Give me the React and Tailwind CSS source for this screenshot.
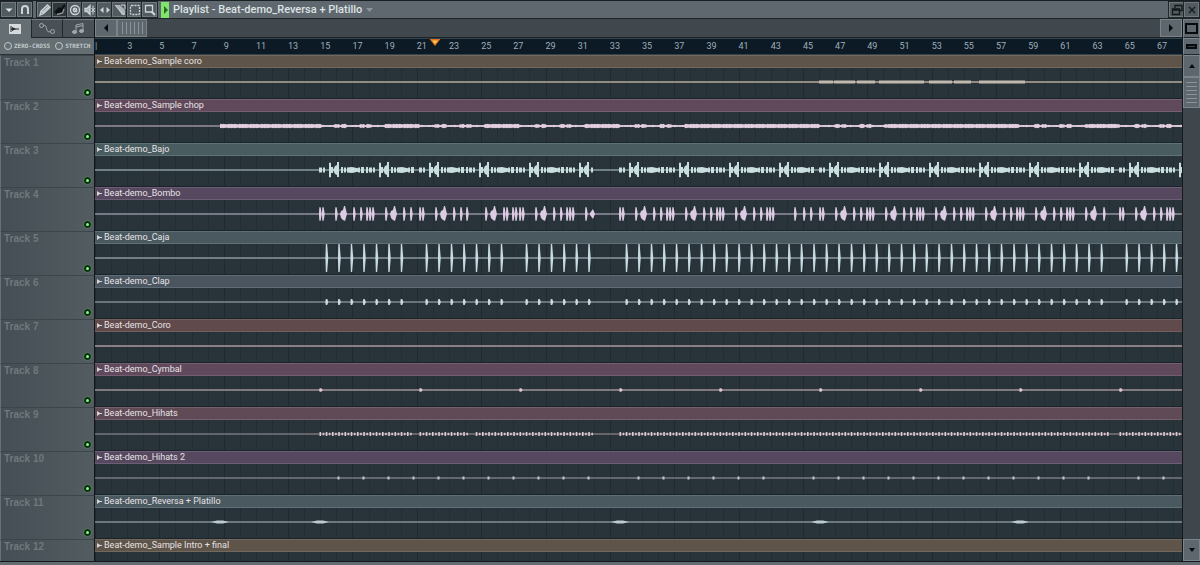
import { useState } from "react";
import clsx from "clsx";

const VIEW_W = 1087;
const MID = 14;
const BAR = 16.09;

const FULL = [16, "big24", 34, 41, 47, 50, 53];

// kick pattern, one entry for each 50 unit loop
const KICK = [
  [0, 3, ...FULL],
  [16, "big24", 34, 41, 50, 53],
  [16, "big24", 34, 41, 47],
  [16, "big24", 34, 37, 43, 46, 50, 53],
  FULL,
  [16, "small23"],
  [0, 3, ...FULL],
  FULL,
  FULL,
  [25, 34, 41, 50, 53],
  FULL,
  FULL,
  FULL,
  FULL,
  FULL,
  [16, "big24", 34],
  [0, 3, ...FULL],
];

const TRACKS = [
  { name: "Sample coro", wave: "choir", head: "bg-[#5f5449] border-[#73685d]", line: "text-[#9d968b]", thick: true },
  { name: "Sample chop", wave: "chop", head: "bg-[#60495a] border-[#74606e]", line: "text-[#e3cede]" },
  { name: "Bajo", wave: "bass", head: "bg-[#495c5f] border-[#5f7374]", line: "text-[#c9dfdf]" },
  { name: "Bombo", wave: "kick", head: "bg-[#56485f] border-[#6c5d74]", line: "text-[#dccbe3]" },
  { name: "Caja", wave: "snare", head: "bg-[#4a5960] border-[#5f7075]", line: "text-[#c9dbe2]" },
  { name: "Clap", wave: "clap", head: "bg-[#4a5560] border-[#5f6d77]", line: "text-[#b9c5cc]" },
  { name: "Coro", wave: "none", head: "bg-[#604a4c] border-[#745f5f]", line: "text-[#95878a]", thick: true },
  { name: "Cymbal", wave: "cymbal", head: "bg-[#60495c] border-[#745e6e]", line: "text-[#8b8088]", thick: true },
  { name: "Hihats", wave: "hats", head: "bg-[#604a56] border-[#745f6a]", line: "text-[#b4a2aa]" },
  { name: "Hihats 2", wave: "hats2", head: "bg-[#56495f] border-[#6c5e74]", line: "text-[#a9a5b2]" },
  { name: "Reversa + Platillo", wave: "reverse", head: "bg-[#4a5860] border-[#5f6f77]", line: "text-[#bccbd0]" },
  { name: "Sample Intro + final", wave: "none", head: "bg-[#5f5449] border-[#73685d]", line: "text-[#9d968b]" },
];

// waves that are brighter than their centre line
const WAVE_FILL = {
  choir: "#c0b9ac",
  clap: "#cbd8df",
  cymbal: "#dfc8d2",
  hats: "#dfc8d2",
  hats2: "#cbc6d4",
};

// closed shape: quick attack, short tail
const hit = (x, h, w = 1) =>
  `M${x - w} ${MID} L${x - w * 0.6} ${MID - h} L${x + w * 0.6} ${MID - h} L${x + w * 1.6} ${MID} L${x + w * 0.6} ${MID + h} L${x - w * 0.6} ${MID + h}Z`;

const block = (x1, x2, h) => `M${x1} ${MID - h}H${x2}V${MID + h}H${x1}Z`;

function snareSlots() {
  const out = [];
  for (let k = 0; k < 69; k++) {
    if ([7, 15, 22, 23, 63].includes(k)) continue;
    out.push(231.5 + k * 12.5);
  }
  return out;
}

function chopPath() {
  const loud = [[125, 227], [295, 325], [395, 425], [495, 525], [595, 725], [795, 925], [995, 1025]];
  const blobs = [17, 24, 42, 49, 67];
  let top = "";
  let bottom = "";
  for (let x = 125; x <= VIEW_W; x++) {
    const isLoud = loud.some(([a, b]) => x >= a && x < b);
    const pos = (x - 25) % 100;
    const isBlob = blobs.some((b) => Math.abs(pos - b) < 3);
    const noise = ((x * 37) % 11) / 14;
    const h = isLoud ? 1.6 + noise : isBlob ? 1.5 + noise : 0.7 + noise * 0.6;
    top += ` L${x} ${MID - h}`;
    bottom = ` L${x} ${MID + h}` + bottom;
  }
  return `M125 ${MID}${top}${bottom}Z`;
}

function bassPath() {
  let d = "";
  for (let k = 0; k < 18; k++) {
    const x = 225 + k * 50;
    if (k === 0 || k === 6) d += block(x - 1, x + 2, 2.5) + block(x + 3, x + 5, 2.5);
    d += block(x + 9, x + 11, 7.3) + block(x + 11, x + 13, 3);
    d += `M${x + 13} ${MID} L${x + 15} ${MID - 4} L${x + 17} ${MID - 5} V${MID - 8} H${x + 19} V${MID + 7} H${x + 17} V${MID + 5} L${x + 15} ${MID + 4}Z`;
    if (k === 5) {
      d += block(x + 21, x + 23, 2.5);
      continue;
    }
    d += block(x + 21, x + 23, 3) + block(x + 24, x + 26, 2.6);
    d += `M${x + 27} ${MID - 2.4} L${x + 32} ${MID - 3} L${x + 39} ${MID - 1.6} V${MID + 1.6} L${x + 32} ${MID + 3} L${x + 27} ${MID + 2.4}Z`;
    d += block(x + 38, x + 40, 2.4) + block(x + 41, x + 44, 3);
    const quiet = k % 8 === 1 || k === 15;
    if (!quiet) d += block(x + 46, x + 48, 3);
    d += block(x + 49, x + 52, 2.4) + block(x + 53, x + 55, 2.6);
  }
  return d;
}

function kickPath() {
  return KICK.map((hits, k) =>
    hits
      .map((h) => {
        const base = 225 + k * 50;
        if (h === "big24") {
          const x = base + 24;
          return `M${x - 4} ${MID} L${x - 3} ${MID - 3} L${x - 1} ${MID - 4} L${x} ${MID - 8} L${x + 1} ${MID - 8} L${x + 3} ${MID} L${x + 1} ${MID + 7} L${x - 1} ${MID + 6} L${x - 3} ${MID + 4}Z`;
        }
        if (h === "small23") {
          const x = base + 23;
          return `M${x - 3} ${MID - 1} L${x} ${MID - 5} L${x + 2} ${MID} L${x} ${MID + 5} L${x - 3} ${MID + 1}Z`;
        }
        return hit(base + h, 6.8, 1.1);
      })
      .join("")
  ).join("");
}

function hatsPath() {
  let d = "";
  for (let x = 224.5; x < VIEW_W; x += 3.125) {
    const gap = (x > 316 && x < 323) || (x > 373 && x < 379) || (x > 499 && x < 524) || (x > 1013 && x < 1023);
    if (gap) continue;
    const main = Math.round((x - 224.5) / 3.125) % 2 === 0;
    d += block(x, x + 1.6, main ? 2 : 1.2);
  }
  return d;
}

const PATHS = {
  none: "",
  chop: chopPath(),
  bass: bassPath(),
  kick: kickPath(),
  snare: snareSlots().map((x) => hit(x, 14, 1.1)).join(""),
  clap: snareSlots().map((x) => hit(x, 3, 1.2)).join(""),
  cymbal: [0, 1, 2, 3, 4, 5, 6, 7, 8].map((k) => hit(225.5 + k * 100, 1.8, 1.4)).join(""),
  hats: hatsPath(),
  hats2: Array.from({ length: 34 }, (_, k) => k)
    .filter((k) => ![11, 18, 31].includes(k))
    .map((k) => block(242.5 + k * 25, 244.5 + k * 25, 1.4))
    .join(""),
  reverse: [125, 225, 525, 725, 925]
    .map((x) => `M${x - 9} ${MID} L${x - 3} ${MID - 1.5} H${x + 3} L${x + 9} ${MID} L${x + 3} ${MID + 1.5} H${x - 3}Z`)
    .join(""),
  choir: [[724, 738], [739, 760], [762, 780], [784, 829], [834, 857], [859, 876], [884, 930]]
    .map(([a, b]) => block(a, b, 1.4))
    .join(""),
};

function Waveform({ track }) {
  return (
    <svg
      className={clsx("block h-[31px] w-full bg-[#29343a]", track.line)}
      viewBox={`0 0 ${VIEW_W} 31`}
      preserveAspectRatio="none"
      aria-hidden="true"
    >
      {Array.from({ length: 68 }, (_, i) => (
        <rect key={i} x={Math.round(i * BAR)} y="0" width="1" height="31" fill={i % 4 === 0 ? "#1f292f" : "#232e34"} />
      ))}
      <rect x="0" y="30" width={VIEW_W} height="1" fill="#1a242b" />
      <rect x="0" y={track.thick ? MID - 1 : MID - 0.5} width={VIEW_W} height={track.thick ? 2 : 1} fill="currentColor" opacity="0.9" />
      <path d={PATHS[track.wave]} fill={WAVE_FILL[track.wave] || "currentColor"} />
    </svg>
  );
}

function ToolButton({ label, active, children }) {
  return (
    <button
      type="button"
      aria-label={label}
      className={clsx(
        "flex h-[15px] w-[15px] items-center justify-center border border-[#70797e] outline outline-[#20282c]",
        active ? "bg-[#30383c]" : "bg-[#525b60]"
      )}
    >
      <svg className="h-3 w-3" viewBox="0 0 12 12" fill="none" stroke="#cdd5d8" strokeWidth="1.3">
        {children}
      </svg>
    </button>
  );
}

function TitleBar() {
  return (
    <header className="flex h-[19px] shrink-0 items-center border-t border-b border-t-[#1a1f23] border-b-[#1d2529] bg-[#5f686e] px-px">
      <div className="flex gap-px">
        <ToolButton label="Playlist menu">
          <path d="M2.5 4.5H9.5L6 8Z" fill="#dfe5e7" stroke="none" />
        </ToolButton>
        <ToolButton label="Snap">
          <path d="M3 10V5A3 3 0 0 1 9 5V10" strokeWidth="2" />
        </ToolButton>
      </div>
      <div className="ml-[5px] flex">
        <ToolButton label="Draw">
          <path d="M1 11L2 7L8.5 1L11 3.5L4.5 9.5Z" fill="#7d878b" />
          <path d="M2.5 7L5 9.5M4 8L9.5 3" />
        </ToolButton>
        <ToolButton label="Paint" active>
          <path d="M8 4L11 1" stroke="#0d1113" strokeWidth="2" />
          <path d="M1 8L5 4L9 5L8 8L4 10Z" fill="#0d1113" stroke="#0d1113" />
          <path d="M3 10.5L8.5 9L10 5" stroke="#8c969a" />
        </ToolButton>
        <ToolButton label="Delete">
          <circle cx="6" cy="6" r="4.5" />
          <circle cx="6" cy="6" r="1.8" />
          <path d="M4.5 4.5L8 8" />
        </ToolButton>
        <ToolButton label="Mute">
          <path d="M1 4.5H3L6 1.5V10.5L3 7.5H1Z" fill="#aab3b7" />
          <path d="M7.5 4L11 8M11 4L7.5 8M9 1.5V10.5" strokeWidth="1" />
        </ToolButton>
        <ToolButton label="Slip edit">
          <path d="M4.5 3V9L1 6ZM7.5 3V9L11 6Z" fill="#cdd5d8" stroke="none" />
        </ToolButton>
        <ToolButton label="Slice">
          <path d="M1 1H6L11 6V11H8Z" fill="#aab3b7" stroke="none" />
          <path d="M1 1L10 11M7 1H11V5" strokeWidth="1" />
        </ToolButton>
        <ToolButton label="Select">
          <rect x="1.5" y="1.5" width="9" height="9" rx="1" strokeDasharray="2 1" />
        </ToolButton>
        <ToolButton label="Zoom">
          <path d="M1.5 1.5H8.5V8H1.5Z" />
          <path d="M7.5 7.5L11 11" strokeWidth="2.2" />
        </ToolButton>
      </div>
      <button type="button" aria-label="Play" className="ml-[4px] flex h-4 w-[8px] items-center justify-center bg-[#7fe56b]">
        <svg className="h-[8px] w-[5px]" viewBox="0 0 5 8" fill="#2c6b25">
          <path d="M1 0L5 4L1 8Z" />
        </svg>
      </button>
      <h1 className="ml-[4px] font-[Roboto,sans-serif] text-[11px] leading-4 font-medium whitespace-nowrap text-[#dde3e5]">
        Playlist - Beat-demo_Reversa + Platillo
      </h1>
      <svg className="ml-1 h-[4px] w-[7px]" viewBox="0 0 7 4" fill="#8b9498">
        <path d="M0 0H7L3.5 4Z" />
      </svg>
      <div className="ml-auto flex">
        <ToolButton label="Restore window">
          <path d="M4 4V1.5H11V6.5H9M1.5 5H8.5V10.5H1.5ZM1.5 6H8.5" stroke="#12181b" />
        </ToolButton>
        <ToolButton label="Close">
          <path d="M3 3L9 9M9 3L3 9" stroke="#12181b" />
        </ToolButton>
      </div>
    </header>
  );
}

function Tab({ label, active, onClick, children }) {
  return (
    <button
      type="button"
      aria-label={label}
      onClick={onClick}
      className={clsx(
        "flex flex-1 items-center justify-center border-t border-t-[#727c81]",
        active ? "bg-[#646e73]" : "border-b border-l border-b-[#20282c] border-l-[#20282c] bg-[#495156]"
      )}
    >
      <svg className="h-[13px] w-[18px]" viewBox="0 0 18 13" fill="none" stroke="#a0a9ad">
        {children}
      </svg>
    </button>
  );
}

function ScrollButton({ label, className, d }) {
  return (
    <button type="button" aria-label={label} className={clsx("flex shrink-0 items-center justify-center border border-[#7a848a] bg-[#5d676d]", className)}>
      <svg className="h-[8px] w-[8px]" viewBox="0 0 8 8" fill="#080b0d">
        <path d={d} />
      </svg>
    </button>
  );
}

function SnapOption({ id, children }) {
  return (
    <label htmlFor={id} className="flex items-center gap-[2px] font-['DejaVu_Sans_Mono',monospace] text-[6px] leading-[8px] font-bold whitespace-nowrap text-[#c2cacd]">
      <input id={id} type="checkbox" className="h-[8px] w-[8px] appearance-none rounded-full border border-[#c2cacd] checked:bg-[#c2cacd]" />
      {children}
    </label>
  );
}

function TrackHeader({ number, on, onToggle }) {
  return (
    <div className="flex h-11 shrink-0 justify-between border-t border-l border-t-[#3d454a] border-l-[#66727a] bg-linear-to-r from-[#454e54] to-[#535c61] pl-[3px]">
      <span className="pt-px font-['Liberation_Sans',sans-serif] text-[10px] leading-[12px] font-bold text-[#6e797c]">
        Track {number}
      </span>
      <button
        type="button"
        aria-label={`Mute track ${number}`}
        onClick={onToggle}
        className="mr-[3px] mb-[3px] flex h-[7px] w-[7px] items-center justify-center self-end rounded-full border-2 border-[#0c2f10] bg-[#0c2f10] outline outline-[#5d8a62]/50"
      >
        <span className={clsx("h-[3px] w-[3px] shrink-0 rounded-full", on ? "bg-[#7dfb7c]" : "bg-[#214a24]")} />
      </button>
    </div>
  );
}

function Clip({ track }) {
  return (
    <div className="h-11 shrink-0">
      <div className={clsx("flex h-[13px] items-start gap-[2px] border-t border-b pl-[2px]", track.head)}>
        <svg className="mt-[3px] h-[5px] w-[5px] shrink-0" viewBox="0 0 5 5" fill="#d8d5d6">
          <path d="M0 0L3 2H5V3H3L0 5Z" />
        </svg>
        <span className="font-[Roboto,sans-serif] text-[9px] leading-[10px] whitespace-nowrap text-[#e6e2e4]">
          Beat-demo_{track.name}
        </span>
      </div>
      <Waveform track={track} />
    </div>
  );
}

function Ruler() {
  return (
    <div className="relative h-[17px] shrink-0 border-y border-t-[#33434c] border-b-[#33434c] bg-[#0b1a24]">
      <div className="grid h-full grid-cols-[repeat(33,minmax(0,200fr))_minmax(0,156fr)] font-[Roboto,sans-serif] text-[9px] leading-[15px] text-[#9fb0b8]">
        {Array.from({ length: 34 }, (_, i) => (
          <span key={i}>{i === 0 ? "|" : i * 2 + 1}</span>
        ))}
      </div>
      {/* song position */}
      <svg className="absolute top-0 left-[31.3%] h-[7px] -translate-x-1/2" width="11" viewBox="0 0 11 7">
        <path d="M0 0H11L5.5 7Z" fill="#e0701c" />
        <path d="M2.5 1.5H8.5L5.5 5Z" fill="#ffc85a" />
      </svg>
    </div>
  );
}

function App() {
  const [tab, setTab] = useState("clips");
  const [muted, setMuted] = useState({});

  const toggle = (i) => setMuted({ ...muted, [i]: !muted[i] });

  return (
    <div className="flex h-screen flex-col overflow-hidden bg-[#3f474c] select-none">
      <TitleBar />
      <div className="flex min-h-0 flex-1 border-b border-[#14191c]">
        <aside className="flex w-[95px] shrink-0 flex-col overflow-hidden border-r border-[#10171b]">
          <div className="flex h-[19px] shrink-0">
            <Tab label="Audio clips" active={tab === "clips"} onClick={() => setTab("clips")}>
              <rect x="3" y="1" width="12" height="10" fill="#d5dbdd" stroke="none" />
              <path d="M5 3V9M5 6H13" stroke="#20282c" />
              <path d="M6 4L10 6L6 8Z" fill="#20282c" stroke="none" />
            </Tab>
            <Tab label="Automation" active={tab === "automation"} onClick={() => setTab("automation")}>
              <circle cx="3.5" cy="3.5" r="2" />
              <circle cx="14.5" cy="9.5" r="2" />
              <path d="M5.5 3.5C10 2 7 12 12.5 9.5" />
            </Tab>
            <Tab label="Patterns" active={tab === "patterns"} onClick={() => setTab("patterns")}>
              <path d="M6 10V3L13 1.5V9M6 5L13 3.5" />
              <ellipse cx="4.5" cy="10" rx="2" ry="1.5" fill="#a0a9ad" />
              <ellipse cx="11.5" cy="9" rx="2" ry="1.5" fill="#a0a9ad" />
            </Tab>
          </div>
          <div className="flex h-[17px] shrink-0 items-center gap-[5px] border-b border-[#2a3236] bg-[#646e73] pl-[4px]">
            <SnapOption id="zero-cross">ZERO-CROSS</SnapOption>
            <SnapOption id="stretch">STRETCH</SnapOption>
          </div>
          {TRACKS.map((t, i) => (
            <TrackHeader key={t.name} number={i + 1} on={!muted[i]} onToggle={() => toggle(i)} />
          ))}
        </aside>

        <main className="flex min-w-0 flex-1 flex-col overflow-hidden">
          <div className="flex h-[19px] shrink-0 border-b border-[#1a2226] bg-[#40484d]">
            <ScrollButton label="Scroll left" className="w-[22px]" d="M6 0V8L2 4Z" />
            <div className="flex w-[30px] items-center justify-center gap-[3px] border border-[#7a848a] bg-[#5d676d]">
              {[0, 1, 2, 3, 4, 5].map((n) => (
                <span key={n} className="h-[12px] w-px bg-[#8a9499]" />
              ))}
            </div>
            <ScrollButton label="Scroll right" className="ml-auto w-[22px]" d="M2 0V8L6 4Z" />
          </div>
          <Ruler />
          {TRACKS.map((t) => (
            <Clip key={t.name} track={t} />
          ))}
        </main>

        <div className="flex w-[18px] shrink-0 flex-col border-l border-[#14191c] bg-[#40474c]">
          <button type="button" aria-label="Picker panel" className="flex h-[19px] shrink-0 items-center justify-center border border-b-[#20282c] border-[#7a848a] bg-[#5d676d]">
            <span className="h-[11px] w-[13px] border-2 border-[#080b0d]" />
          </button>
          <button type="button" aria-label="Track size" className="flex h-[17px] shrink-0 items-center justify-center border border-b-[#20282c] border-[#7a848a] bg-[#5d676d]">
            <span className="h-[5px] w-[11px] border-2 border-[#080b0d] bg-[#3a4348]" />
          </button>
          <ScrollButton label="Scroll up" className="h-[22px]" d="M1 6H7L4 2Z" />
          <div className="flex h-[31px] shrink-0 flex-col items-center justify-center gap-[3px] border border-[#7a848a] bg-[#5d676d]">
            {[0, 1, 2, 3, 4, 5].map((n) => (
              <span key={n} className="h-px w-[11px] bg-[#8a9499]" />
            ))}
          </div>
          <ScrollButton label="Scroll down" className="mt-auto h-[22px]" d="M1 2H7L4 6Z" />
        </div>
      </div>
      <footer className="h-[3px] shrink-0 bg-[#626c71]" />
    </div>
  );
}

export default App;
